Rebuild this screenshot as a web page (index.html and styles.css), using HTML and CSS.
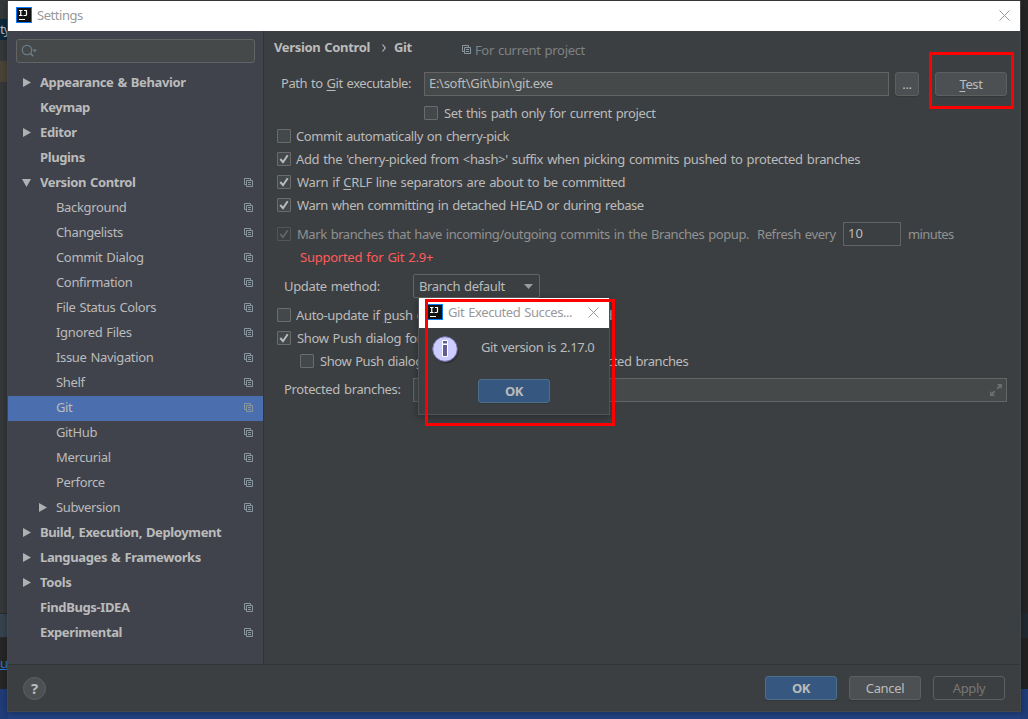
FILE: index.html
```html
<!DOCTYPE html>
<html lang="en">
<head>
<meta charset="utf-8">
<title>Settings</title>
<link rel="stylesheet" href="styles.css">
</head>
<body>
<svg class="defs" width="0" height="0">
  <symbol id="copy" viewBox="0 0 9 9"><path d="M.5 6.5V.5H6.5M.5 6.500H2M6.500 .5V2M2.500 2.500H8.500V8.500H2.500ZM4 4.500H7M4 6.500H7" fill="none" stroke="currentColor"/></symbol>
  <symbol id="right" viewBox="0 0 8 9"><path d="M0 0L8 4.500L0 9Z" fill="currentColor"/></symbol>
  <symbol id="down" viewBox="0 0 9 8"><path d="M0 0H9L4.500 8Z" fill="currentColor"/></symbol>
  <symbol id="check" viewBox="0 0 12 12"><path d="M2.300 6L5 9.200L9.700 2.200" fill="none" stroke="currentColor" stroke-width="2"/></symbol>
  <symbol id="close" viewBox="0 0 11 11"><path d="M.5 .5L10.500 10.500M10.500 .5L.5 10.500" fill="none" stroke="currentColor"/></symbol>
  <symbol id="logo" viewBox="0 0 16 16"><path d="M0 0H16V16H0Z" fill="#087cfa"/><path d="M1 1H15V15H1Z" fill="#111"/><path d="M3 3.500H6.500M4.750 3.500V8.500M3 8.500H6.500M8 3.500H11M10.500 3.500V7.500Q10.500 8.500 9.500 8.500H7.500M3 12.500H9" fill="none" stroke="#fff" stroke-width="1.200"/></symbol>
</svg>

<div class="desk" aria-hidden="true">
  <div class="strip strip-left">
    <div class="l-top"></div><div class="l-tab">ty</div><div class="l-gap"></div><div class="l-tan"></div>
    <div class="l-mid"></div><div class="l-bar"></div><div class="l-log"><span>u</span></div><div class="l-task"></div>
  </div>
  <div class="strip strip-right"><div class="r-mid"></div><div class="r-bar"></div><div class="r-log"></div><div class="l-task"></div></div>
</div>

<div class="window">
  <header class="titlebar">
    <svg class="logo"><use href="#logo"/></svg><span class="title">Settings</span>
    <svg class="x"><use href="#close"/></svg>
  </header>
  <div class="body">
    <nav class="sidebar">
      <div class="search"><svg width="18" height="14" viewBox="0 0 18 14"><circle cx="6" cy="6" r="4.700" fill="none" stroke="#6e7e88" stroke-width="1.300"/><path d="M9.400 9.400L12.300 12.300" stroke="#6e7e88" stroke-width="1.500"/><path d="M11.500 5.500H16L13.750 8.300Z" fill="#6e7e88"/></svg></div>
      <ul class="tree">
        <li class="top"><svg class="arr"><use href="#right"/></svg><span>Appearance &amp; Behavior</span></li>
        <li class="top"><i class="arr"></i><span>Keymap</span></li>
        <li class="top"><svg class="arr"><use href="#right"/></svg><span>Editor</span></li>
        <li class="top"><i class="arr"></i><span>Plugins</span></li>
        <li class="top"><svg class="arr open"><use href="#down"/></svg><span>Version Control</span><svg class="copy"><use href="#copy"/></svg></li>
        <li><i class="arr"></i><span>Background</span><svg class="copy"><use href="#copy"/></svg></li>
        <li><i class="arr"></i><span>Changelists</span><svg class="copy"><use href="#copy"/></svg></li>
        <li><i class="arr"></i><span>Commit Dialog</span><svg class="copy"><use href="#copy"/></svg></li>
        <li><i class="arr"></i><span>Confirmation</span><svg class="copy"><use href="#copy"/></svg></li>
        <li><i class="arr"></i><span>File Status Colors</span><svg class="copy"><use href="#copy"/></svg></li>
        <li><i class="arr"></i><span>Ignored Files</span><svg class="copy"><use href="#copy"/></svg></li>
        <li><i class="arr"></i><span>Issue Navigation</span><svg class="copy"><use href="#copy"/></svg></li>
        <li><i class="arr"></i><span>Shelf</span><svg class="copy"><use href="#copy"/></svg></li>
        <li class="selected"><i class="arr"></i><span>Git</span><svg class="copy"><use href="#copy"/></svg></li>
        <li><i class="arr"></i><span>GitHub</span><svg class="copy"><use href="#copy"/></svg></li>
        <li><i class="arr"></i><span>Mercurial</span><svg class="copy"><use href="#copy"/></svg></li>
        <li><i class="arr"></i><span>Perforce</span><svg class="copy"><use href="#copy"/></svg></li>
        <li><svg class="arr"><use href="#right"/></svg><span>Subversion</span><svg class="copy"><use href="#copy"/></svg></li>
        <li class="top"><svg class="arr"><use href="#right"/></svg><span>Build, Execution, Deployment</span></li>
        <li class="top"><svg class="arr"><use href="#right"/></svg><span>Languages &amp; Frameworks</span></li>
        <li class="top"><svg class="arr"><use href="#right"/></svg><span>Tools</span></li>
        <li class="top"><i class="arr"></i><span>FindBugs-IDEA</span><svg class="copy"><use href="#copy"/></svg></li>
        <li class="top"><i class="arr"></i><span>Experimental</span><svg class="copy"><use href="#copy"/></svg></li>
      </ul>
    </nav>

    <main class="content">
      <div class="crumbs"><b>Version Control</b><svg class="chev" viewBox="0 0 4 8"><path d="M.5 .5L3.300 4L.5 7.500" fill="none" stroke="#bbb" stroke-width="1.200"/></svg><b>Git</b>
        <span class="scope"><svg class="copy"><use href="#copy"/></svg>For current project</span></div>
      <div class="path-row"><label class="path-label">Path to <u>G</u>it executable:</label><div class="field path">E:\soft\Git\bin\git.exe</div><div class="btn dots">...</div><div class="btn test"><span><u>T</u>est</span></div></div>
      <div class="row set"><i class="box"></i><span class="t-set">Set this path only for current project</span></div>
      <div class="row"><i class="box"></i><span class="t-commit">Commit automatically on cherry-pick</span></div>
      <div class="row"><svg class="box"><use href="#check"/></svg><span>Add the 'cherry-picked from &lt;hash&gt;' suffix when picking commits pushed to protected branches</span></div>
      <div class="row"><svg class="box"><use href="#check"/></svg><span class="in">Warn if <u>C</u>RLF line separators are about to be committed</span></div>
      <div class="row"><svg class="box"><use href="#check"/></svg><span class="in t-detached">Warn when committing in detached HEAD or during rebase</span></div>
      <div class="row mark"><svg class="box"><use href="#check"/></svg><span class="t-mark in">Mark branches that have incoming/outgoing commits in the Branches popup.</span><span class="refresh">Refresh every</span><div class="field num">10</div><span class="minutes">minutes</span></div>
      <div class="warning">Supported for Git 2.9+</div>
      <div class="update"><label>Update method:</label><div class="select"><span>Branch default</span><svg width="9" height="5" viewBox="0 0 9 5"><path d="M0 0H9L4.500 5Z" fill="#9a9da0"/></svg></div></div>
      <div class="row auto"><i class="box"></i><span>Auto-update if <u>p</u>ush <span class="rest">of current branch was rejected</span></span></div>
      <div class="row"><svg class="box"><use href="#check"/></svg><span class="in">Show Push dialog for Commit and Push</span></div>
      <div class="row nested"><i class="box"></i><span class="t-only">Show Push dialog only when committing to protected branches</span></div>
      <div class="protected"><label>Protected branches:</label><div class="field"><span>master</span><svg width="12" height="12" viewBox="0 0 12 12"><path d="M7 0H12V5L10.300 3.300L7.800 5.500L6.500 4.200L8.700 1.700ZM0 7L1.700 8.700L4 6.500L5.300 7.800L3.300 10.300L5 12H0Z" fill="#696e70"/></svg></div></div>
    </main>
  </div>
  <footer class="footer"><div class="help">?</div><div class="btn primary">OK</div><div class="btn">Cancel</div><div class="btn disabled">Apply</div></footer>
</div>

<section class="dialog">
  <header><svg class="logo"><use href="#logo"/></svg><span>Git Executed Succes...</span><svg class="x"><use href="#close"/></svg></header>
  <div class="message"><svg class="info" width="30" height="30" viewBox="0 0 30 30"><circle cx="14.500" cy="15" r="12.500" fill="#1b1b22" opacity=".35"/><circle cx="13" cy="13" r="12.300" fill="#ccccff" stroke="#7770aa"/><path d="M10.500 4.500H15.500V8H10.500ZM10.500 8.500H15.500V20.500H10.500Z" fill="#625e92" stroke="#fff"/></svg><span>Git version is 2.17.0</span></div>
  <div class="btn primary">OK</div>
</section>
<div class="mark-dialog"></div>
<div class="mark-test"></div>
</body>
</html>
```
FILE: styles.css
```css
* { box-sizing: border-box; }
body {
  margin: 0; width: 1028px; height: 719px; overflow: hidden; position: relative;
  background: #2b2b2b; color: #bbbbbb;
  font: 13px/18px "Noto Sans", "Open Sans", sans-serif;
  letter-spacing: -.35px; word-spacing: 1px; white-space: nowrap;
}
u { text-decoration-thickness: 1px; text-underline-offset: 2px; }
.defs { position: absolute; }
svg { display: block; flex: none; }

/* Application visible behind the settings window */
.desk { position: absolute; inset: 0; display: flex; justify-content: space-between; background: linear-gradient(#3c3f41 1px, #214283 1px); }
.strip { width: 8px; height: 719px; overflow: hidden; display: flex; flex-direction: column; }
.l-top { height: 19px; background: #36393b; }
.l-tab { height: 21px; background: #0d293e; line-height: 20px; letter-spacing: -1px; }
.l-gap { height: 21px; background: #36393b; }
.l-tan { height: 21px; background: #4b4538; }
.l-mid { flex: 1; background: #36393b; }
.l-bar { height: 25px; background: #364450; border: solid #2b2b2b; border-width: 1px 0; }
.l-log { height: 51px; background: #262626; color: #287bde; text-decoration: underline; padding-top: 16px; }
.l-task { height: 30px; background: #203d79; }
.r-mid { flex: 1; background: #252525; }
.r-bar { height: 25px; background: #222a31; }
.r-log { height: 51px; background: #222; }

.window {
  position: absolute; left: 7px; top: 1px; width: 1014px; height: 711px;
  display: flex; flex-direction: column; background: #3c3f41;
  border: 1px solid #43474a; border-top: 0; box-shadow: 0 1px 7px rgba(0,0,0,.35);
}
.titlebar { height: 30px; flex: none; background: #fff; color: #999; display: flex; align-items: center; padding: 0 10px 0 8px; }
.logo { width: 16px; height: 16px; }
.titlebar .logo { margin-top: -2px; }
.title { margin: -2px 0 0 5px; letter-spacing: -.45px; }
.x { width: 11px; height: 11px; color: #999; margin-left: auto; }
.titlebar .x { margin-top: -1px; }
.body { flex: 1; display: flex; min-height: 0; }
.sidebar { width: 256px; flex: none; background: #40434c; border-right: 1px solid #323536; padding-top: 8px; }
.search { height: 24px; margin: 0 8px; border: 1px solid #646464; border-radius: 3px; background: #45494a; padding: 4px; }
.tree { list-style: none; margin: 8px 0 0; padding: 0; }
.tree li { height: 25px; display: flex; align-items: center; padding: 0 10px 2px 30px; }
.tree li.top { padding-left: 14px; font-weight: bold; letter-spacing: -.38px; }
.tree span { margin-top: -1px; }
.arr { width: 8px; height: 9px; margin: 0 9px 0 1px; flex: none; color: #afb1b3; }
.arr.open { width: 9px; height: 8px; margin: 0 9px 0 0; }
.tree .selected { background: #4b6eaf; }
.copy { width: 9px; height: 9px; color: #89969f; }
.tree .copy { margin-left: auto; }

.content { flex: 1; min-width: 0; padding: 4px 13px 0 13px; }
.crumbs { height: 24px; margin: 0 0 13px -3px; display: flex; align-items: center; }
.crumbs b { letter-spacing: -.35px; }
.chev { width: 4px; height: 8px; margin: 1px 8px 0 12px; }
.scope { display: flex; align-items: center; gap: 4px; color: #7f8284; margin: 5px 0 0 50px; letter-spacing: -.32px; }
.path-row { height: 24px; display: flex; padding-left: 4px; }
.path-label { width: 143px; line-height: 23px; letter-spacing: -.46px; }
.field { height: 24px; border: 1px solid #646464; background: #45494a; line-height: 21px; padding: 0 4px; }
.path { width: 465px; letter-spacing: -.3px; }
.btn { width: 72px; height: 24px; border: 1px solid #5e6060; border-radius: 3px; background: #4c5052; display: flex; align-items: center; justify-content: center; box-shadow: 0 1px 1px rgba(0,0,0,.15); }
.dots { width: 24px; margin: 0 16px 0 6px; }
.row { height: 23px; display: flex; align-items: center; }
.box { width: 14px; height: 14px; flex: none; border: 1px solid #6b6b6b; border-radius: 1px; background: #43494a; margin-right: 5px; color: #bbb; }
.row .in { margin-left: 1px; }
.set { margin: 5px 0 0 147px; }
.set .box { margin-right: 6px; }
.t-set { letter-spacing: -.4px; }
.t-commit { letter-spacing: -.41px; }
.t-detached { letter-spacing: -.43px; }
.mark { height: 24px; margin-top: 6px; color: #919191; }
.mark .box { border-color: #535657; background: #3c3f41; color: #606364; }
.t-mark { letter-spacing: -.43px; width: 452px; }
.refresh { margin-left: 8px; width: 79px; letter-spacing: -.4px; }
.num { width: 58px; margin: 0 7px; background: #3c3f41; color: #bbb; letter-spacing: 0; }
.minutes { letter-spacing: -.6px; }
.warning { height: 22px; line-height: 22px; color: #ff5b5b; padding-left: 23px; letter-spacing: -.25px; }
.update { height: 26px; margin-top: 5px; display: flex; align-items: center; padding-left: 7px; }
.update label { width: 129px; }
.select { width: 127px; height: 24px; border: 1px solid #646464; border-radius: 2px; display: flex; align-items: center; justify-content: space-between; padding: 0 6px 0 5px; }
.auto { margin-top: 4px; }
.rest { letter-spacing: .18px; }
.nested { padding-left: 23px; }
.t-only { letter-spacing: -.44px; }
.nested .box { margin-right: 6px; }
.protected { display: flex; margin-top: 6px; padding-left: 7px; line-height: 23px; }
.protected label { width: 129px; }
.protected .field { flex: 1; display: flex; align-items: center; justify-content: space-between; color: #777; }

.footer { height: 47px; flex: none; border-top: 1px solid #323536; display: flex; align-items: center; gap: 12px; padding: 0 15px; }
.help { width: 23px; height: 23px; border: 1px solid #5e6060; border-radius: 50%; background: #4c5052; text-align: center; font-weight: bold; font-size: 15px; line-height: 21px; margin-right: auto; }
.primary { background: #365880; border-color: #4c708c; font-weight: bold; }
.disabled { background: none; color: #777; box-shadow: none; }

/* Result dialog and highlight frames lie over the window */
.dialog { position: absolute; left: 418px; top: 298px; width: 192px; height: 117px; background: #3c3f41; border: 1px solid #505355; border-top: 0; box-shadow: 0 2px 7px rgba(0,0,0,.35); }
.dialog header { height: 30px; background: #fff; color: #999; display: flex; align-items: center; padding: 0 10px 0 8px; }
.dialog header .logo { margin-top: -2px; }
.dialog header span { margin: -2px 0 0 5px; letter-spacing: -.42px; }
.dialog header .x { margin-top: -2px; }
.message { height: 51px; display: flex; padding: 8px 0 0 13px; }
.message span { margin: 2px 0 0 19px; letter-spacing: -.4px; }
.dialog .btn { margin-left: 59px; }
.mark-dialog, .mark-test { position: absolute; border: 3px solid #f00; }
.mark-dialog { left: 425px; top: 299px; width: 190px; height: 127px; }
.mark-test { left: 929px; top: 52px; width: 85px; height: 57px; }
```
